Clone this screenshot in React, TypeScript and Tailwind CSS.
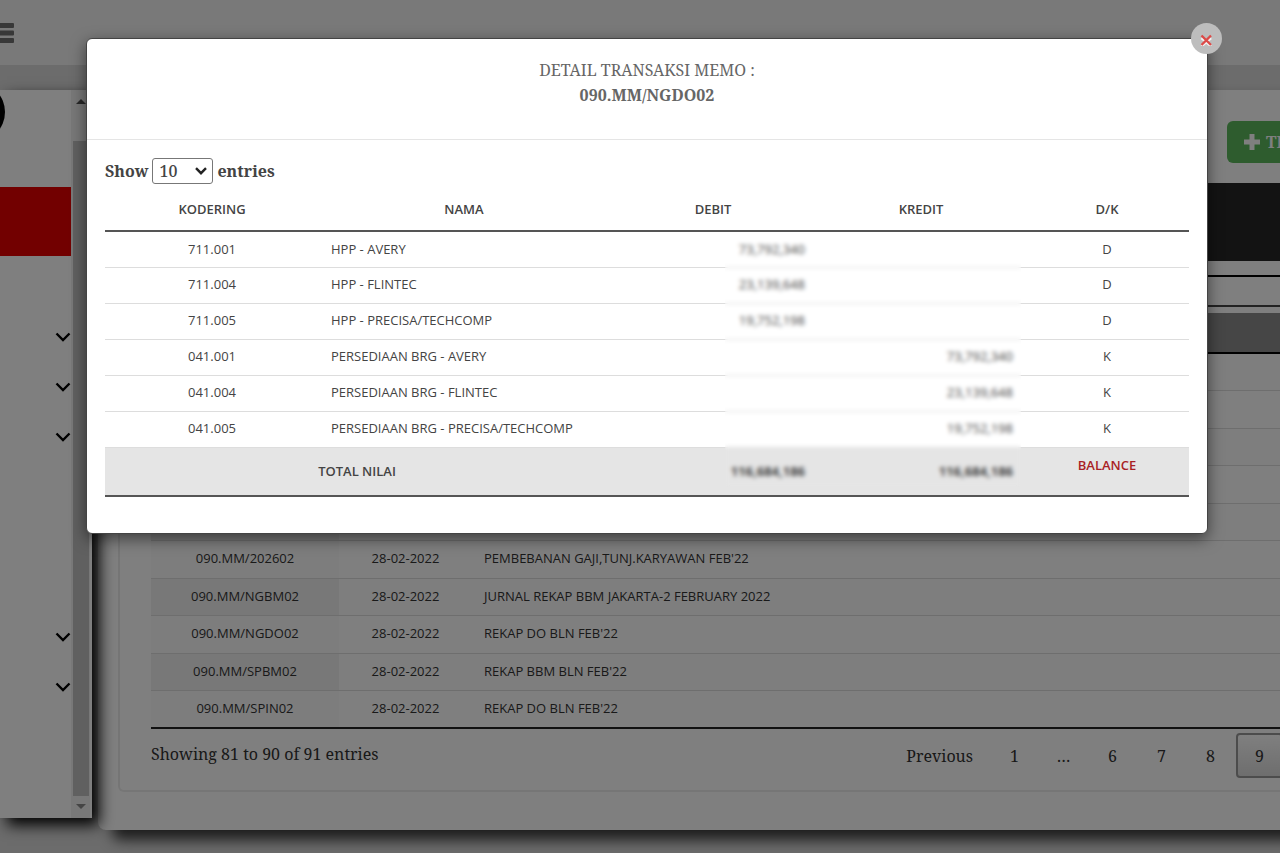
import type { ReactNode } from "react";

type Memo = { code: string; date: string; note: string };
type Entry = { code: string; name: string; debit: string; kredit: string; side: string };

const memos: Memo[] = [
  { code: "", date: "", note: "" },
  { code: "", date: "", note: "" },
  { code: "", date: "", note: "" },
  { code: "", date: "", note: "" },
  { code: "", date: "", note: "" },
  { code: "090.MM/202602", date: "28-02-2022", note: "PEMBEBANAN GAJI,TUNJ.KARYAWAN FEB'22" },
  { code: "090.MM/NGBM02", date: "28-02-2022", note: "JURNAL REKAP BBM JAKARTA-2 FEBRUARY 2022" },
  { code: "090.MM/NGDO02", date: "28-02-2022", note: "REKAP DO BLN FEB'22" },
  { code: "090.MM/SPBM02", date: "28-02-2022", note: "REKAP BBM BLN FEB'22" },
  { code: "090.MM/SPIN02", date: "28-02-2022", note: "REKAP DO BLN FEB'22" },
];

const entries: Entry[] = [
  { code: "711.001", name: "HPP - AVERY", debit: "73,792,340", kredit: "", side: "D" },
  { code: "711.004", name: "HPP - FLINTEC", debit: "23,139,648", kredit: "", side: "D" },
  { code: "711.005", name: "HPP - PRECISA/TECHCOMP", debit: "19,752,198", kredit: "", side: "D" },
  { code: "041.001", name: "PERSEDIAAN BRG - AVERY", debit: "", kredit: "73,792,340", side: "K" },
  { code: "041.004", name: "PERSEDIAAN BRG - FLINTEC", debit: "", kredit: "23,139,648", side: "K" },
  { code: "041.005", name: "PERSEDIAAN BRG - PRECISA/TECHCOMP", debit: "", kredit: "19,752,198", side: "K" },
];

function Chevron() {
  return (
    <svg viewBox="0 0 16 10" className="h-[10px] w-4" fill="none" stroke="#000" strokeWidth="2.4">
      <path d="M1.5 1.5 L8 8 L14.5 1.5" />
    </svg>
  );
}

function MenuItem({ children }: { children?: ReactNode }) {
  return <li className="flex h-[50px] items-center justify-end">{children}</li>;
}

function Sidebar() {
  return (
    <aside className="z-10 flex h-[728px] w-[92px] shrink-0 bg-white pr-[2px] shadow-[7px_7px_14px_0px_#000]">
      <div className="flex-1 overflow-hidden">
        <div className="h-[97px]">
          <svg viewBox="0 0 6 50" className="h-[50px] w-[6px]">
            <circle cx="-25" cy="22" r="30" fill="#000" />
          </svg>
        </div>
        <div className="h-[69px] bg-[#e40000]" />
        <ul className="pt-[56px]">
          <MenuItem><Chevron /></MenuItem>
          <MenuItem><Chevron /></MenuItem>
          <MenuItem><Chevron /></MenuItem>
          <MenuItem />
          <MenuItem />
          <MenuItem />
          <MenuItem><Chevron /></MenuItem>
          <MenuItem><Chevron /></MenuItem>
        </ul>
      </div>
      <div className="flex w-[19px] flex-col bg-[#f1f1f1] pr-px pl-[2px]">
        <div className="flex h-[51px] justify-center pt-[9px]">
          <svg viewBox="0 0 10 5" className="h-[5px] w-[10px]"><path d="M0 5 L5 0 L10 5Z" fill="#505050" /></svg>
        </div>
        <div className="flex-1 bg-[#c1c1c1]" />
        <div className="flex h-[22px] justify-center pt-[8px]">
          <svg viewBox="0 0 10 5" className="h-[5px] w-[10px]"><path d="M0 0 L5 5 L10 0Z" fill="#8a8a8a" /></svg>
        </div>
      </div>
    </aside>
  );
}

function PageButton({ children }: { children: ReactNode }) {
  return <button className="h-[45px] min-w-[47px] px-4">{children}</button>;
}

function Main() {
  return (
    <main className="-mr-[60px] ml-[6px] h-[740px] min-w-0 flex-1 rounded-lg bg-white pl-[20px] shadow-[14px_10px_14px_0px_#3a3a3a]">
      <div className="flex h-[93px] items-start justify-end pt-[31px]">
        <button className="flex h-[42px] w-[113px] items-center gap-[5px] overflow-hidden rounded-md bg-[#5cb85c] pl-4 font-bold whitespace-nowrap text-white">
          <svg viewBox="0 0 18 18" className="size-[18px] shrink-0" fill="currentColor">
            <path d="M6.500 1h5v5.500H17v5h-5.500V17h-5v-5.500H1v-5h5.500Z" />
          </svg>
          <span>TRANSAKSI</span>
        </button>
      </div>
      <section className="h-[609px] rounded-b-md border-2 border-t-0 border-[#ececec] pl-[31px]">
        <div className="h-[78px] bg-[#262626]" />
        <div className="mt-[14px] h-[32px] border-y-2 border-t-black border-b-[#444]" />
        <table className="mt-[6px] w-full table-fixed border-collapse border-b-2 border-[#222] font-['Open_Sans',sans-serif] text-[13px] text-[#333]">
          <colgroup>
            <col className="w-[188px]" />
            <col className="w-[133px]" />
            <col />
          </colgroup>
          <thead>
            <tr className="h-[40px] border-b-2 border-black bg-[#8c8c8c]">
              <th /><th /><th />
            </tr>
          </thead>
          <tbody>
            {memos.map((m, i) => (
              <tr key={i} className="border-t border-[#dcdcdc] odd:h-[37px] even:h-[38px] odd:bg-[#fcfcfc] even:bg-white">
                <td className={i % 2 ? "bg-[#fafafa] text-center" : "bg-[#f1f1f1] text-center"}>{m.code}</td>
                <td className="text-center">{m.date}</td>
                <td className="pl-3">{m.note}</td>
              </tr>
            ))}
          </tbody>
        </table>
        <div className="flex justify-between pt-1 pr-[55px]">
          <p className="pt-[9px] leading-6">Showing 81 to 90 of 91 entries</p>
          <nav className="flex gap-[2px]">
            <PageButton>Previous</PageButton>
            <PageButton>1</PageButton>
            <span className="flex w-[47px] items-center justify-center">…</span>
            <PageButton>6</PageButton>
            <PageButton>7</PageButton>
            <PageButton>8</PageButton>
            <button className="h-[45px] w-[47px] rounded-sm border-2 border-[#999] bg-linear-to-b from-white to-[#dcdcdc]">9</button>
          </nav>
        </div>
      </section>
    </main>
  );
}

function DetailDialog() {
  return (
    <div role="dialog" aria-labelledby="memo-title" className="relative w-full rounded-md border border-[#444] bg-white pb-9 text-[#444] shadow-[0_5px_15px_0_rgba(0,0,0,0.5)]">
      <button aria-label="Close" className="absolute -top-4 -right-[15px] flex size-[31px] items-center justify-center rounded-full bg-[#bdbdbd]">
        <svg viewBox="0 0 14 15" className="h-[15px] w-[14px]" fill="none" strokeWidth="2.8">
          <path d="M1.500 7 L11 15 M11 7 L1.500 15" stroke="#f2f2f2" />
          <path d="M1.500 4.500 L11 14 M11 4.500 L1.500 14" stroke="#dc4a48" strokeWidth="2.400" />
        </svg>
      </button>
      <header className="h-[101px] border-b border-[#e5e5e5] pt-[19px] text-center leading-[25px] text-[#666]">
        <h2 id="memo-title">
          DETAIL TRANSAKSI MEMO :<br />
          <b>090.MM/NGDO02</b>
        </h2>
      </header>
      <div className="px-[18px] pt-[18px]">
        <label className="flex items-center gap-1 font-bold">
          Show
          <span className="relative flex items-center">
            <select className="h-[26px] w-[61px] appearance-none rounded-[3px] border border-[#777] bg-white pl-[6px] font-medium">
              <option>10</option>
            </select>
            <svg viewBox="0 0 12 8" className="pointer-events-none absolute right-[6px] h-[8px] w-[12px]" fill="none" stroke="#222" strokeWidth="2.4">
              <path d="M1 1.2 L6 6.2 L11 1.2" />
            </svg>
          </span>
          entries
        </label>
        <div className="relative pt-[6px]">
          <table className="w-full table-fixed border-collapse font-['Open_Sans',sans-serif] text-[13px]">
            <colgroup>
              <col className="w-[214px]" />
              <col className="w-[290px]" />
              <col className="w-[208px]" />
              <col className="w-[208px]" />
              <col />
            </colgroup>
            <thead>
              <tr className="h-[41px] border-b-2 border-[#555]">
                {["KODERING", "NAMA", "DEBIT", "KREDIT", "D/K"].map((h) => (
                  <th key={h} className="font-semibold">{h}</th>
                ))}
              </tr>
            </thead>
            <tbody>
              {entries.map((e) => (
                <tr key={e.code} className="h-[36px] border-b border-[#ddd]">
                  <td className="text-center">{e.code}</td>
                  <td className="pl-3">{e.name}</td>
                  <td className="pr-3 text-right">{e.debit}</td>
                  <td className="pr-3 text-right">{e.kredit}</td>
                  <td className="text-center">{e.side}</td>
                </tr>
              ))}
            </tbody>
            <tfoot>
              <tr className="h-[49px] border-b-2 border-[#555] bg-[#e5e5e5] font-semibold">
                <td colSpan={2} className="text-center">TOTAL NILAI</td>
                <td className="pr-3 text-right font-bold">116,684,186</td>
                <td className="pr-3 text-right font-bold">116,684,186</td>
                <td className="pb-3 text-center text-[#a91f26]">BALANCE</td>
              </tr>
            </tfoot>
          </table>
          <div className="pointer-events-none absolute top-[50px] right-[168px] bottom-[10px] left-[620px] backdrop-blur-[2px]" />
        </div>
      </div>
    </div>
  );
}

export default function App() {
  return (
    <div className="relative h-screen overflow-hidden bg-[#d8d8d8] font-['Noto_Serif','Droid_Serif','DejaVu_Serif_Condensed','Liberation_Serif',serif] text-[16px] text-[#333]">
      <header className="flex h-[65px] items-center overflow-hidden bg-[#f2f2f2]">
        <button aria-label="Menu" className="-ml-[9px]">
          <svg viewBox="0 0 23 20" className="h-5 w-[23px]" fill="#707070">
            <rect width="23" height="5" rx="1" />
            <rect y="7.5" width="23" height="5" rx="1" />
            <rect y="15" width="23" height="5" rx="1" />
          </svg>
        </button>
      </header>
      <div className="flex pt-[25px]">
        <Sidebar />
        <Main />
      </div>
      <div className="absolute inset-0 z-20 bg-black/50 pt-[38px] pr-[72px] pl-[86px]">
        <DetailDialog />
      </div>
    </div>
  );
}
